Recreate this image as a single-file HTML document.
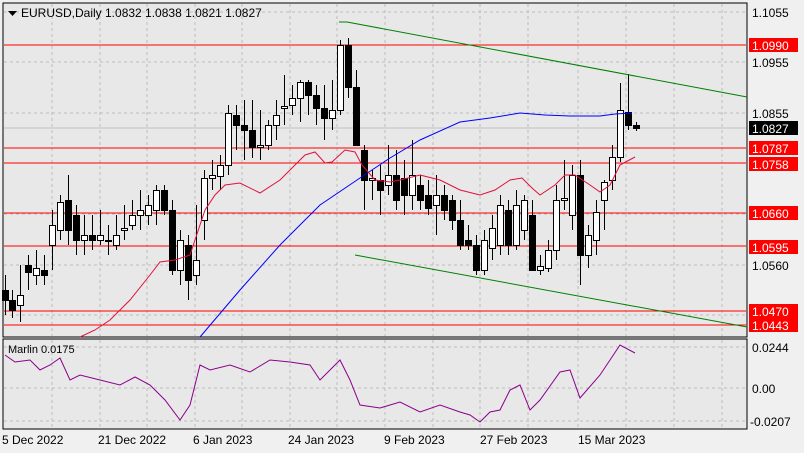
<!DOCTYPE html>
<html><head><style>
body{margin:0;width:804px;height:453px;background:#fff;overflow:hidden;font-family:"Liberation Sans",sans-serif}
svg{display:block}
</style></head><body>
<svg id="s" width="804" height="453" xmlns="http://www.w3.org/2000/svg" font-family="Liberation Sans, sans-serif" font-size="12">
<rect width="804" height="453" fill="#f0f0f0"/>
<rect x="3" y="3" width="744" height="334" fill="#e8e8e8" stroke="#000"/>
<rect x="3" y="339" width="744" height="90" fill="#e8e8e8" stroke="#000"/>
<g stroke="#bdbdbd" stroke-dasharray="3,3" stroke-width="1">
<path d="M52 4V336M100 4V336M147 4V336M195 4V336M242 4V336M290 4V336M337 4V336M385 4V336M433 4V336M480 4V336M528 4V336M578 4V336M626 4V336M674 4V336M722 4V336"/>
<path d="M4 12H746M4 62H746M4 113H746M4 163H746M4 214H746M4 265H746M4 315H746"/>
<path d="M52 340V428M100 340V428M147 340V428M195 340V428M242 340V428M290 340V428M337 340V428M385 340V428M433 340V428M480 340V428M528 340V428M578 340V428M626 340V428M674 340V428M722 340V428M4 347H746M4 388H746M4 421H746"/>
</g>
<line x1="4" y1="128" x2="746" y2="128" stroke="#c0c0c0"/>
<g stroke="#f00" stroke-width="1"><path d="M4 45H746M4 148H746M4 163H746M4 213H746M4 246H746M4 311H746M4 325H746"/></g>
<g id="c"></g>
<polyline fill="none" stroke="#00f" points="200,337 240,290 280,245 320,205 360,178 390,158 420,140 460,122 490,118 520,113 545,115 570,116 600,116 615,114 632,113"/>
<polyline fill="none" stroke="#e0103a" points="80,337 95,330 110,320 130,300 150,275 160,262 175,260 190,255 205,210 215,195 225,185 240,183 260,193 280,180 295,165 305,155 315,152 325,163 332,162 345,150 355,152 362,165 375,180 390,182 400,180 420,175 440,180 460,190 480,195 495,190 510,180 522,178 532,188 540,195 555,185 565,175 575,175 590,185 600,192 610,185 620,165 635,157"/>
<line x1="347" y1="22" x2="747" y2="97" stroke="#008000"/>
<line x1="339" y1="22" x2="347" y2="22" stroke="#008000"/>
<line x1="355" y1="255" x2="747" y2="327" stroke="#008000"/>
<polyline fill="none" stroke="#8b008b" points="5,355 15,362 30,360 40,370 50,365 60,358 70,380 80,375 100,380 120,385 135,377 150,385 165,400 180,420 190,405 200,365 210,370 230,365 250,372 270,360 290,362 310,365 320,380 340,360 350,380 360,405 380,408 400,402 420,412 440,405 460,412 470,415 480,422 490,412 500,410 510,390 520,385 530,410 540,400 560,372 570,370 580,398 600,375 610,360 620,345 635,353"/>
<path d="M8 11h9l-4.5 5z" fill="#000"/>
<text x="21" y="17" font-size="12">EURUSD,Daily  1.0832 1.0838 1.0821 1.0827</text>
<text x="8" y="353" font-size="11">Marlin 0.0175</text>
<g font-size="12">
<text x="752" y="17">1.1055</text><text x="752" y="67">1.0955</text><text x="752" y="118">1.0855</text><text x="752" y="270">1.0560</text>
<text x="752" y="352">0.0244</text><text x="752" y="393">0.00</text><text x="750" y="426">-0.0207</text>
</g>
<g font-size="12" fill="#fff">
<rect x="749" y="38" width="49" height="14" fill="#f00"/><text x="752" y="50">1.0990</text>
<rect x="749" y="121" width="49" height="14" fill="#000"/><text x="752" y="133">1.0827</text>
<rect x="749" y="141" width="49" height="14" fill="#f00"/><text x="752" y="153">1.0787</text>
<rect x="749" y="157" width="49" height="14" fill="#f00"/><text x="752" y="169">1.0758</text>
<rect x="749" y="206" width="49" height="14" fill="#f00"/><text x="752" y="218">1.0660</text>
<rect x="749" y="240" width="49" height="14" fill="#f00"/><text x="752" y="252">1.0595</text>
<rect x="749" y="304" width="49" height="14" fill="#f00"/><text x="752" y="316">1.0470</text>
<rect x="749" y="318" width="49" height="14" fill="#f00"/><text x="752" y="330">1.0443</text>
</g>
<g font-size="12">
<text x="2" y="444">5 Dec 2022</text><text x="98" y="444">21 Dec 2022</text><text x="193" y="444">6 Jan 2023</text><text x="288" y="444">24 Jan 2023</text><text x="384" y="444">9 Feb 2023</text><text x="480" y="444">27 Feb 2023</text><text x="578" y="444">15 Mar 2023</text>
</g>
</svg>
<script>
var d=[[5,275,315,290,300],[12,290,318,300,310],[20,265,322,305,295],[28,255,290,265,272],[36,250,285,275,268],[44,255,285,270,275],[52,210,270,245,225],[60,195,240,230,202],[68,175,245,200,230],[76,205,255,215,240],[84,215,255,240,235],[92,215,250,235,240],[100,210,245,240,235],[108,225,255,240,240],[116,215,250,245,235],[124,205,240,230,228],[132,200,230,225,215],[140,190,230,215,210],[148,195,225,215,205],[156,185,225,210,190],[164,185,215,190,210],[172,200,275,210,270],[180,230,285,270,240],[188,235,300,245,280],[196,205,285,275,260],[204,170,240,220,178],[212,160,190,178,175],[220,155,190,176,165],[228,105,175,165,113],[236,105,150,115,125],[244,100,160,125,130],[252,100,158,130,147],[260,110,160,147,145],[268,120,150,145,125],[276,100,140,125,115],[284,75,125,108,106],[292,85,115,105,98],[300,80,122,98,82],[308,80,115,82,95],[316,85,125,95,108],[324,85,140,108,118],[332,80,130,118,110],[340,40,115,110,45],[348,38,98,45,87],[356,70,145,87,145],[364,145,210,150,180],[372,170,200,180,178],[380,165,215,180,190],[388,145,195,185,175],[396,150,210,175,200],[404,160,215,178,195],[412,140,210,195,175],[420,175,210,185,200],[428,180,215,195,208],[436,175,235,205,195],[444,185,220,195,210],[452,195,230,200,220],[460,200,250,220,245],[468,225,250,240,245],[476,235,275,245,270],[484,230,275,270,240],[492,215,260,248,228],[500,195,255,245,205],[508,200,255,210,245],[516,190,250,245,205],[524,195,240,230,200],[532,200,270,215,270],[540,255,275,270,266],[548,240,272,268,250],[556,185,260,250,200],[564,160,210,200,198],[572,165,230,215,175],[580,160,285,175,255],[588,225,268,255,235],[596,200,255,240,212],[604,180,230,200,182],[612,145,190,180,157],[620,83,162,157,110],[628,74,130,112,125],[636,122,131,125,128]];
var g=document.getElementById('c'),h='';
d.forEach(function(c){var x=c[0],o=c[3],cl=c[4],t=Math.min(o,cl),b=Math.max(o,cl);if(b-t<1)b=t+1;
h+='<line x1="'+(x+.5)+'" y1="'+c[1]+'" x2="'+(x+.5)+'" y2="'+c[2]+'" stroke="#000"/>';
h+='<rect x="'+(x-2.5)+'" y="'+(t+.5)+'" width="6" height="'+(b-t)+'" fill="'+(cl<o?'#fff':'#000')+'" stroke="#000"/>';});
g.innerHTML=h;
</script>
</body></html>
